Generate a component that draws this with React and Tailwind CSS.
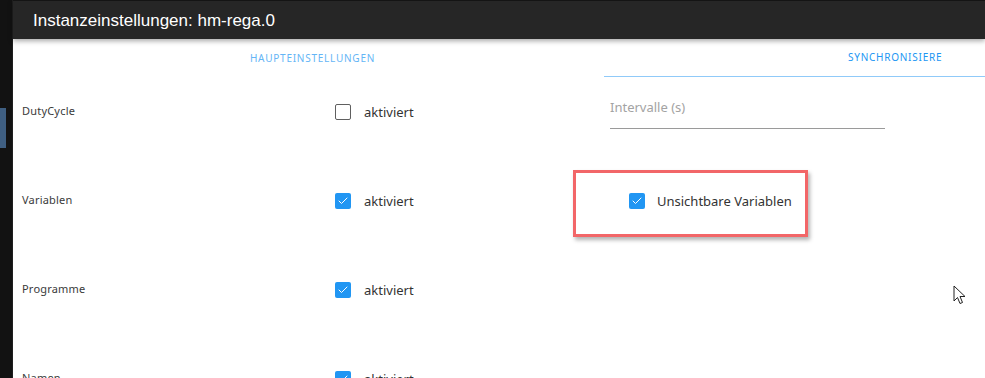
import { Check } from "lucide-react";

const Box = ({ checked }) =>
    checked ? (
        <span className="w-4 h-4 rounded-[2px] bg-[#2196f3] flex items-center justify-center shrink-0">
            <Check className="w-3 h-3 text-white" strokeWidth={2} />
        </span>
    ) : (
        <span className="w-4 h-4 rounded-[2px] border-[1.5px] border-[#5f5f5f] bg-white shrink-0" />
    );

const rows = [
    { label: "DutyCycle", checked: false },
    { label: "Variablen", checked: true },
    { label: "Programme", checked: true },
    { label: "Namen", checked: true },
];

const App = () => {
    return (
        <div className="w-[985px] h-[378px] overflow-hidden flex bg-[#121212] font-['Noto_Sans',sans-serif]">
            <div className="w-[12px] shrink-0 flex flex-col pt-[108px]">
                <div className="w-[6px] h-[40px] bg-[#3f5f82]" />
            </div>
            <div className="w-px shrink-0 bg-[#1f1f1f]" />
            <div className="flex-1 flex flex-col bg-white min-w-0">
                <div className="h-[39px] shrink-0 bg-[#262626] border-t border-[#141414] flex items-center pl-[20px] shadow-[0_2px_5px_rgba(0,0,0,0.35)] z-10">
                    <h1 className="text-[17px] text-white font-['Liberation_Sans',Arial,sans-serif] leading-none pt-px">
                        Instanzeinstellungen: hm-rega.0
                    </h1>
                </div>
                <div className="flex flex-1 min-h-0">
                    <div className="w-[591px] shrink-0 flex flex-col">
                        <div className="h-[38px] shrink-0 flex items-center justify-center text-[10px] tracking-[0.75px] text-[#64b5f6] pl-[8px]">
                            HAUPTEINSTELLUNGEN
                        </div>
                        {rows.map((r) => (
                            <div key={r.label} className="h-[89px] shrink-0 flex items-start pt-[26px] pl-[9px]">
                                <span className="w-[313px] text-[11px] text-[#3a3a3a] leading-[16px] tracking-[0.2px]">{r.label}</span>
                                <label className="flex items-center gap-[13px] pt-[1px]">
                                    <Box checked={r.checked} />
                                    <span className="text-[13px] text-[#333] leading-[16px]">aktiviert</span>
                                </label>
                            </div>
                        ))}
                    </div>
                    <div className="flex-1 flex flex-col min-w-0 relative">
                        <div className="h-[38px] shrink-0 flex items-center pl-[244px] text-[10px] tracking-[0.75px] text-[#2196f3] border-b border-[#90caf9] whitespace-nowrap">
                            SYNCHRONISIERE
                        </div>
                        <div className="ml-[6px] w-[275px] mt-[22px] border-b border-[#9a9a9a] pb-[13px] text-[13px] text-[#a3a3a3] leading-[16px]">
                            Intervalle (s)
                        </div>
                        <div className="relative mt-[64px] ml-[25px] flex items-center gap-[12px] w-max">
                            <div className="absolute left-[-56px] top-[-23px] w-[235px] h-[67px] border-[3px] border-[#f26668] shadow-[2px_3px_4px_rgba(0,0,0,0.3)]" />
                            <Box checked />
                            <span className="text-[13px] text-[#333] leading-[16px]">Unsichtbare Variablen</span>
                        </div>
                        <svg className="absolute left-[349px] top-[246px]" width="14" height="20" viewBox="0 0 14 20">
                            <path d="M1 1 L1 16 L4.5 12.5 L7 18.5 L9.5 17.5 L7 11.5 L12 11.5 Z" fill="white" stroke="#222" strokeWidth="1" strokeLinejoin="round" />
                        </svg>
                    </div>
                </div>
            </div>
        </div>
    );
};

export default App;
